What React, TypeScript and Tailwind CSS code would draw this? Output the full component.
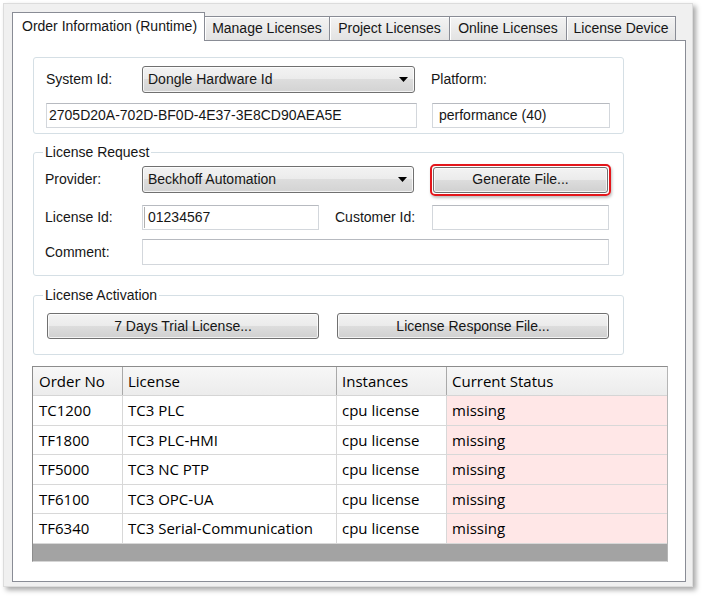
import React from 'react';

const ui = "font-['Liberation_Sans',Arial,sans-serif] text-[14px] text-[#161616]";
const grid = "font-['Open_Sans','Noto_Sans',sans-serif] text-[15px] text-black";

const Arrow = () => (
  <svg width="9" height="5" viewBox="0 0 9 5">
    <path d="M0 0h9L4.5 5z" fill="#000" />
  </svg>
);

const Dropdown = ({ value, className }: { value: string; className: string }) => (
  <div
    className={`${className} h-[27px] flex items-center justify-between rounded-[3px] border border-[#707070] bg-[linear-gradient(to_bottom,#f3f3f3_0%,#ebebeb_50%,#dddddd_50%,#d3d3d3_100%)] shadow-[inset_0_0_0_1px_rgba(255,255,255,0.75)] pl-[5px] pr-[6px]`}
  >
    <span>{value}</span>
    <Arrow />
  </div>
);

const Button = ({ label, className }: { label: string; className: string }) => (
  <div
    className={`${className} h-[26px] flex items-center justify-center rounded-[3px] border border-[#707070] bg-[linear-gradient(to_bottom,#f3f3f3_0%,#ebebeb_50%,#dddddd_50%,#d0d0d0_100%)] shadow-[inset_0_0_0_1px_rgba(255,255,255,0.75)]`}
  >
    {label}
  </div>
);

const Field = ({ children, className }: { children?: React.ReactNode; className: string }) => (
  <div className={`${className} flex items-center border border-[#d3d7dc] border-t-[#b7bac0] bg-white`}>
    {children}
  </div>
);

const rows = [
  { no: 'TC1200', lic: 'TC3 PLC', h: 'h-[30px]' },
  { no: 'TF1800', lic: 'TC3 PLC-HMI', h: 'h-[29px]' },
  { no: 'TF5000', lic: 'TC3 NC PTP', h: 'h-[30px]' },
  { no: 'TF6100', lic: 'TC3 OPC-UA', h: 'h-[29px]' },
  { no: 'TF6340', lic: 'TC3 Serial-Communication', h: 'h-[30px]' },
];

const inactiveTab =
  'ml-[-1px] h-[24px] flex items-center justify-center border border-b-0 border-[#898c95] bg-[linear-gradient(to_bottom,#f3f3f3,#e3e3e3)] shadow-[inset_1px_1px_0_#ffffff]';

const App: React.FC = () => {
  return (
    <div className={`w-[705px] h-[599px] bg-white pt-[3px] pl-[3px] ${ui}`}>
      <div className="w-[690px] h-[584px] bg-[#f0f0f0] border border-[#dcdcdc] shadow-[3px_3px_5px_rgba(0,0,0,0.35)] pt-[8px] pl-[8px]">
        {/* tabs */}
        <div className="flex items-end h-[28px]">
          <div className="relative z-10 w-[193px] h-[29px] mb-[-1px] flex items-center pl-[9px] pb-[2px] border border-b-0 border-[#898c95] bg-white">
            Order Information (Runtime)
          </div>
          <div className={`${inactiveTab} w-[126px]`}>Manage Licenses</div>
          <div className={`${inactiveTab} w-[121px]`}>Project Licenses</div>
          <div className={`${inactiveTab} w-[118px]`}>Online Licenses</div>
          <div className={`${inactiveTab} w-[110px]`}>License Device</div>
        </div>

        {/* tab page */}
        <div className="w-[674px] h-[542px] border border-[#898c95] bg-white px-[20px] pt-[16px] flex flex-col">
          {/* system id */}
          <div className="w-[591px] h-[77px] border border-[#d5dfe5] rounded-[3px] pt-[8px] pl-[12px]">
            <div className="flex items-center h-[27px]">
              <span className="w-[96px]">System Id:</span>
              <Dropdown value="Dongle Hardware Id" className="w-[273px]" />
              <span className="ml-[16px]">Platform:</span>
            </div>
            <div className="flex mt-[10px] h-[25px]">
              <Field className="w-[371px] pl-[2px]">2705D20A-702D-BF0D-4E37-3E8CD90AEA5E</Field>
              <Field className="ml-[15px] w-[178px] pl-[6px]">performance (40)</Field>
            </div>
          </div>

          {/* license request */}
          <fieldset className="mt-[10px] w-[591px] border border-[#d5dfe5] rounded-[3px] p-0 pb-[10px]">
            <legend className="ml-[9px] px-[2px] leading-[16px]">License Request</legend>
            <div className="pl-[11px]">
              <div className="flex items-center h-[27px] mt-[6px]">
                <span className="w-[97px]">Provider:</span>
                <Dropdown value="Beckhoff Automation" className="w-[272px]" />
                <div className="ml-[16px] rounded-[5px] border-2 border-[#e3161b] p-[1px] shadow-[1px_2px_3px_rgba(0,0,0,0.25)]">
                  <Button label="Generate File..." className="w-[175px]" />
                </div>
              </div>
              <div className="flex items-center h-[25px] mt-[12px]">
                <span className="w-[97px]">License Id:</span>
                <Field className="w-[177px] h-[25px] pl-[1px]">
                  <span className="w-px h-[21px] bg-[#b0b0b0] mr-[3px]" />
                  01234567
                </Field>
                <span className="ml-[16px] w-[97px]">Customer Id:</span>
                <Field className="w-[177px] h-[25px]" />
              </div>
              <div className="flex items-center h-[26px] mt-[9px]">
                <span className="w-[97px]">Comment:</span>
                <Field className="w-[467px] h-[26px]" />
              </div>
            </div>
          </fieldset>

          {/* license activation */}
          <fieldset className="mt-[11px] w-[591px] border border-[#d5dfe5] rounded-[3px] p-0 pb-[15px]">
            <legend className="ml-[9px] px-[2px] leading-[16px]">License Activation</legend>
            <div className="flex gap-[18px] pl-[13px] mt-[10px]">
              <Button label="7 Days Trial License..." className="w-[272px]" />
              <Button label="License Response File..." className="w-[272px]" />
            </div>
          </fieldset>

          {/* license table */}
          <div className={`mt-[11px] ml-[-1px] w-[636px] h-[196px] flex flex-col border-t border-l border-[#8c8c8c] border-r border-r-[#b5b5b5] border-b border-b-[#d5d5d5] ${grid}`}>
            <div className="grid grid-cols-[90px_214px_110px_1fr] h-[29px] bg-[linear-gradient(to_bottom,#f7f7f7,#ececec)] border-b border-[#d5d5d5]">
              <div className="flex items-center pl-[6px] border-r border-[#a9a9a9]">Order No</div>
              <div className="flex items-center pl-[5px] border-r border-[#a9a9a9]">License</div>
              <div className="flex items-center pl-[5px] border-r border-[#a9a9a9]">Instances</div>
              <div className="flex items-center pl-[5px]">Current Status</div>
            </div>
            {rows.map((r) => (
              <div key={r.no} className={`grid grid-cols-[90px_214px_110px_1fr] ${r.h} border-b border-[#d8d8d8]`}>
                <div className="flex items-center pl-[6px] border-r border-[#d8d8d8]">{r.no}</div>
                <div className="flex items-center pl-[5px] border-r border-[#d8d8d8]">{r.lic}</div>
                <div className="flex items-center pl-[5px] border-r border-[#d8d8d8]">cpu license</div>
                <div className="flex items-center pl-[5px] bg-[#ffe7e7]">missing</div>
              </div>
            ))}
            <div className="flex-1 bg-[#a3a3a3]" />
          </div>
        </div>
      </div>
    </div>
  );
};

export default App;
